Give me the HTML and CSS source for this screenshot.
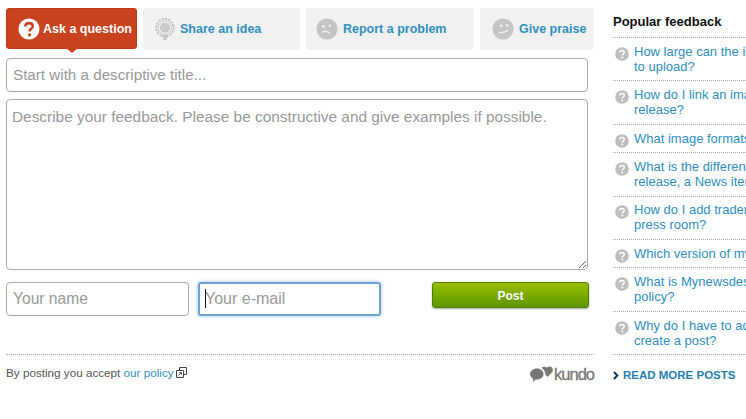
FILE: index.html
```html
<!DOCTYPE html>
<html lang="en">
<head>
<meta charset="utf-8">
<title>Feedback</title>
<link rel="stylesheet" href="styles.css">
</head>
<body>
<div class="page">
  <main class="main">
    <nav class="tabs">
      <a class="tab tab-ask active">
        <svg class="ico" viewBox="0 0 24 24"><circle cx="12" cy="12" r="11.500" fill="#fff"/><path d="M8 9.200C8 6.900 9.700 5.600 12.100 5.600c2.400 0 4 1.300 4 3.300 0 1.700-1 2.500-2.100 3.200-.9.600-1.300 1-1.300 2v.6" fill="none" stroke="#c9431f" stroke-width="2.800"/><circle cx="12.600" cy="18.300" r="1.800" fill="#c9431f"/></svg>
        <span>Ask a question</span>
      </a>
      <a class="tab tab-idea">
        <svg class="ico" viewBox="0 0 24 24"><circle cx="12" cy="10.500" r="9.500" fill="none" stroke="#c4c4c4" stroke-width="2.200" stroke-dasharray="2.400 1.300"/><circle cx="12" cy="10.500" r="7.400" fill="#f4f4f4" stroke="#bbb" stroke-width=".8"/><circle cx="12" cy="10.500" r="5.600" fill="#c9c9c9"/><path d="M9 19.500h6M9.500 21.500h5M10.500 23.300h3" stroke="#b5b5b5" stroke-width="1.200"/></svg>
        <span>Share an idea</span>
      </a>
      <a class="tab tab-problem">
        <svg class="ico" viewBox="0 0 24 24"><circle cx="12" cy="12" r="11.500" fill="#c4c4c4"/><circle cx="8" cy="9" r="1.500" fill="#f0f0f0"/><circle cx="15" cy="8.500" r="1.500" fill="#f0f0f0"/><path d="M7 15.500c2.500-1.500 6-1.200 8.500 1.800" fill="none" stroke="#f0f0f0" stroke-width="1.500"/></svg>
        <span>Report a problem</span>
      </a>
      <a class="tab tab-praise">
        <svg class="ico" viewBox="0 0 24 24"><circle cx="12" cy="12" r="11.500" fill="#c4c4c4"/><circle cx="10" cy="8.500" r="1.500" fill="#f0f0f0"/><circle cx="16.500" cy="8" r="1.500" fill="#f0f0f0"/><path d="M7.500 15.500c3.500.8 7 .2 10-2.500" fill="none" stroke="#f0f0f0" stroke-width="1.500"/></svg>
        <span>Give praise</span>
      </a>
    </nav>
    <form class="form">
      <input class="field title-field" type="text" placeholder="Start with a descriptive title...">
      <textarea class="field body-field" placeholder="Describe your feedback. Please be constructive and give examples if possible."></textarea>
      <div class="form-row">
        <input class="field name-field" type="text" placeholder="Your name">
        <div class="email-wrap">
          <input class="field email-field" type="text" placeholder="Your e-mail">
          <i class="caret"></i>
        </div>
        <button class="post" type="button">Post</button>
      </div>
    </form>
    <footer class="foot">
      <p class="policy"><span>By posting you accept <a>our policy</a></span>
        <svg class="ext" viewBox="0 0 11 11"><path d="M3.500.5h7v7h-7z" fill="#fff" stroke="#444"/><path d="M.5 3.500h7v7h-7z" fill="#fff" stroke="#444"/><path d="M2.500 8.500l3-3M3.500 5.500h2v2" fill="none" stroke="#444"/></svg>
      </p>
      <div class="kundo">
        <svg class="kundo-mark" viewBox="0 0 23 16"><path d="M7 2.500c3.700 0 6.500 2.500 6.500 5.600S10.700 13.600 7 13.600c-.4 0-.8 0-1.200-.1L3 16l.1-3.400C1.200 11.600 0 10 0 8.100 0 5 3.300 2.500 7 2.500z" fill="#777"/><path d="M17 1.800C18 .4 20 0 21.400 1.100c1.700 1.300 1.900 3.500.6 5.200L17.500 11l-2.300-2.900c0-2.600-1.500-5-3.500-6.100C13.100.3 15.700.3 17 1.800z" fill="#777"/></svg>
        <span>kundo</span>
      </div>
    </footer>
  </main>
  <aside class="side">
    <h2 class="side-title">Popular feedback</h2>
    <ul class="list">
      <li class="item"><svg class="q" viewBox="0 0 14 14"><use href="#q"/></svg><a>How large can the image I want<br>to upload?</a></li>
      <li class="item"><svg class="q" viewBox="0 0 14 14"><use href="#q"/></svg><a>How do I link an image in my<br>release?</a></li>
      <li class="item"><svg class="q" viewBox="0 0 14 14"><use href="#q"/></svg><a>What image formats can I use?</a></li>
      <li class="item"><svg class="q" viewBox="0 0 14 14"><use href="#q"/></svg><a>What is the difference between a<br>release, a News item and a blog?</a></li>
      <li class="item"><svg class="q" viewBox="0 0 14 14"><use href="#q"/></svg><a>How do I add trademarks to my<br>press room?</a></li>
      <li class="item"><svg class="q" viewBox="0 0 14 14"><use href="#q"/></svg><a>Which version of my browser?</a></li>
      <li class="item"><svg class="q" viewBox="0 0 14 14"><use href="#q"/></svg><a>What is Mynewsdesk's privacy<br>policy?</a></li>
      <li class="item"><svg class="q" viewBox="0 0 14 14"><use href="#q"/></svg><a>Why do I have to add my name to<br>create a post?</a></li>
    </ul>
    <a class="more"><svg class="chev" viewBox="0 0 6 9"><path d="M1 1l3.300 3.500L1 8" fill="none" stroke="#12365c" stroke-width="2"/></svg>READ MORE POSTS</a>
  </aside>
</div>
<svg class="defs" width="0" height="0"><defs><g id="q"><circle cx="7" cy="7" r="6.800" fill="#bdbdbd"/><path d="M4.800 5.500C4.800 4.200 5.700 3.400 7 3.400s2.300.7 2.300 1.900c0 1-.6 1.400-1.200 1.800-.5.300-.8.600-.8 1.200v.3" fill="none" stroke="#fff" stroke-width="1.500"/><circle cx="7.300" cy="10.500" r="1" fill="#fff"/></g></defs></svg>
</body>
</html>
```

FILE: styles.css
```css
* { box-sizing: border-box; }
html, body { margin: 0; padding: 0; height: 100%; overflow: hidden; background: #fff; }
body { font-family: "Liberation Sans", Arial, sans-serif; color: #444; }
.defs { position: absolute; }
.page { display: flex; width: 746px; overflow: hidden; padding: 8px 0 0 6px; }
.main { width: 588px; flex: none; }
.tabs { display: flex; gap: 6px; height: 42px; }
.tab {
  display: flex; align-items: center; height: 42px; background: #f1f1f1; border-radius: 3px;
  color: #2f8fbf; font-size: 12.500px; font-weight: bold; white-space: nowrap;
}
.tab-ask { width: 131px; padding-left: 11px; gap: 3px; height: 41px; background: #c9431f; color: #fff; border: 1px solid #c23a17; position: relative; }
.tab-ask::after {
  content: ""; position: absolute; left: 59px; bottom: -5px;
  border-style: solid; border-width: 5px 6px 0; border-color: #c9431f transparent transparent;
}
.tab-idea { width: 157px; padding-left: 11px; gap: 4px; }
.tab-problem { width: 168px; padding-left: 10px; gap: 5px; }
.tab-praise { width: 114px; padding-left: 12px; gap: 5px; }
.ico { width: 22px; height: 22px; flex: none; }
.form { display: flex; flex-direction: column; margin-top: 8px; width: 583px; }
.field {
  display: block; border: 1px solid #aaa; border-radius: 4px; background: #fff;
  font-family: inherit; font-size: 16px; color: #333; padding: 0 6px; outline: none;
}
.field::placeholder { color: #999; opacity: 1; }
.title-field { height: 34px; width: 582px; font-size: 15.200px; padding-bottom: 2px; }
.body-field { height: 171px; width: 582px; margin-top: 7px; padding: 8px 5px; display: block; font-size: 15.400px; }
.form-row { display: flex; align-items: flex-start; margin-top: 12px; }
.name-field { width: 183px; height: 34px; font-size: 15.600px; }
.email-wrap { position: relative; margin-left: 9px; width: 183px; height: 34px; }
.email-field {
  width: 183px; height: 34px; border: 2px solid #6ea0d2; border-radius: 3px;
  box-shadow: 0 0 4px #9fc3e8; padding: 0 5px;
}
.caret { position: absolute; left: 7px; top: 7px; width: 1px; height: 19px; background: #111; }
.post {
  margin-left: 51px; width: 157px; height: 26px; border: 1px solid #4b7f00; border-radius: 3px;
  background: linear-gradient(#98bf00, #5f9600); color: #fff; font-family: inherit; font-size: 12px; font-weight: bold;
  box-shadow: 0 1px 2px rgba(0,0,0,.35); text-shadow: 0 1px 0 rgba(0,0,0,.2); padding: 1px 0 0;
}
.foot {
  display: flex; justify-content: space-between; align-items: center; margin-top: 38px; height: 36px;
  border-top: 1px dotted #aaa;
}
.policy { margin: 0; font-size: 11.700px; color: #555; display: flex; align-items: center; gap: 2px; }
.policy a { color: #2f8fbf; }
.ext { width: 11px; height: 11px; }
.kundo { display: flex; align-items: center; gap: 1px; color: #777; font-size: 16.500px; letter-spacing: -1px; -webkit-text-stroke: .3px #777; margin-top: 3px; }
.kundo-mark { width: 23px; height: 16px; }
.side { margin-left: 19px; width: 133px; flex: none; }
.side-title { margin: 0; height: 30px; padding-top: 6px; font-size: 13px; line-height: 15px; color: #111; font-weight: bold; border-bottom: 1px dotted #aaa; white-space: nowrap; }
.list { list-style: none; margin: 0; padding: 0; }
.item {
  display: flex; padding: 5.800px 0 6.600px; border-bottom: 1px dotted #aaa; font-size: 13px; line-height: 15px;
  color: #2f8fbf; white-space: nowrap;
}
.q { width: 14px; height: 14px; flex: none; margin: 3px 5px -3px 2px; }
.more { display: flex; align-items: center; gap: 4px; margin-top: 14px; color: #2581b3; font-size: 11.500px; line-height: 13px; font-weight: bold; white-space: nowrap; }
.chev { width: 6px; height: 9px; }
```
